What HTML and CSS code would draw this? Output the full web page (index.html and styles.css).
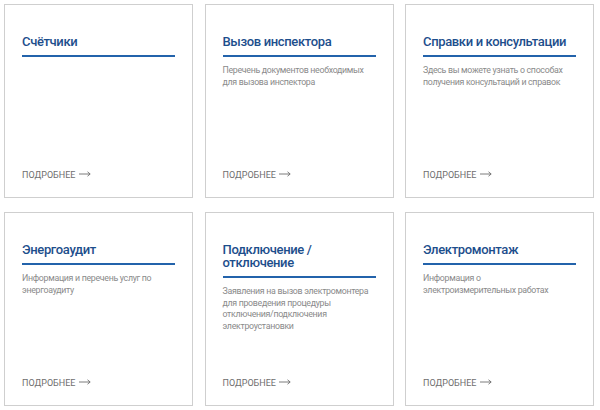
FILE: index.html
```html
<!DOCTYPE html>
<html lang="ru">
<head>
<meta charset="utf-8">
<title>Услуги</title>
<link rel="stylesheet" href="styles.css">
</head>
<body>
<div class="grid">
  <div class="card">
    <h3 class="title">Счётчики</h3>
    <p class="desc"></p>
    <a class="more" href="#">ПОДРОБНЕЕ <svg class="arrow" width="12" height="6" viewBox="0 0 12 6"><path d="M0 3H11M8.5 0.8L11.2 3L8.5 5.2" fill="none" stroke="#6e6e6e" stroke-width="0.9"/></svg></a>
  </div>
  <div class="card">
    <h3 class="title">Вызов инспектора</h3>
    <p class="desc">Перечень документов необходимых для вызова инспектора</p>
    <a class="more" href="#">ПОДРОБНЕЕ <svg class="arrow" width="12" height="6" viewBox="0 0 12 6"><path d="M0 3H11M8.5 0.8L11.2 3L8.5 5.2" fill="none" stroke="#6e6e6e" stroke-width="0.9"/></svg></a>
  </div>
  <div class="card">
    <h3 class="title">Справки и консультации</h3>
    <p class="desc">Здесь вы можете узнать о способах получения консультаций и справок</p>
    <a class="more" href="#">ПОДРОБНЕЕ <svg class="arrow" width="12" height="6" viewBox="0 0 12 6"><path d="M0 3H11M8.5 0.8L11.2 3L8.5 5.2" fill="none" stroke="#6e6e6e" stroke-width="0.9"/></svg></a>
  </div>
  <div class="card">
    <h3 class="title">Энергоаудит</h3>
    <p class="desc">Информация и перечень услуг по энергоаудиту</p>
    <a class="more" href="#">ПОДРОБНЕЕ <svg class="arrow" width="12" height="6" viewBox="0 0 12 6"><path d="M0 3H11M8.5 0.8L11.2 3L8.5 5.2" fill="none" stroke="#6e6e6e" stroke-width="0.9"/></svg></a>
  </div>
  <div class="card">
    <h3 class="title">Подключение /<br>отключение</h3>
    <p class="desc">Заявления на вызов электромонтера для проведения процедуры отключения/подключения электроустановки</p>
    <a class="more" href="#">ПОДРОБНЕЕ <svg class="arrow" width="12" height="6" viewBox="0 0 12 6"><path d="M0 3H11M8.5 0.8L11.2 3L8.5 5.2" fill="none" stroke="#6e6e6e" stroke-width="0.9"/></svg></a>
  </div>
  <div class="card">
    <h3 class="title">Электромонтаж</h3>
    <p class="desc">Информация о<br>электроизмерительных работах</p>
    <a class="more" href="#">ПОДРОБНЕЕ <svg class="arrow" width="12" height="6" viewBox="0 0 12 6"><path d="M0 3H11M8.5 0.8L11.2 3L8.5 5.2" fill="none" stroke="#6e6e6e" stroke-width="0.9"/></svg></a>
  </div>
</div>
</body>
</html>
```
FILE: styles.css
```css
html, body {
  margin: 0;
  padding: 0;
  background: #ffffff;
}
body {
  font-family: Roboto, "Noto Sans", "Liberation Sans", sans-serif;
}
.grid {
  display: grid;
  grid-template-columns: 189px 189px 189px;
  column-gap: 11.5px;
  row-gap: 14px;
  padding: 4px 0 0 4px;
}
.card {
  box-sizing: border-box;
  height: 194px;
  border: 1px solid #cfcfcf;
  padding: 30px 17px 16px 17px;
  display: flex;
  flex-direction: column;
}
.title {
  margin: 0;
  font-size: 13px;
  line-height: 13px;
  font-weight: 500;
  letter-spacing: -0.35px;
  color: #1d4e8c;
  padding-bottom: 7px;
  border-bottom: 2px solid #2363ab;
}
.desc {
  margin: 8px 0 0 0;
  font-size: 8.8px;
  line-height: 11.5px;
  letter-spacing: -0.3px;
  color: #8a8a8a;
}
.more {
  margin-top: auto;
  font-size: 9px;
  line-height: 11px;
  color: #6e6e6e;
  text-decoration: none;
}
.arrow {
  vertical-align: 1px;
  margin-left: 1px;
}
```
